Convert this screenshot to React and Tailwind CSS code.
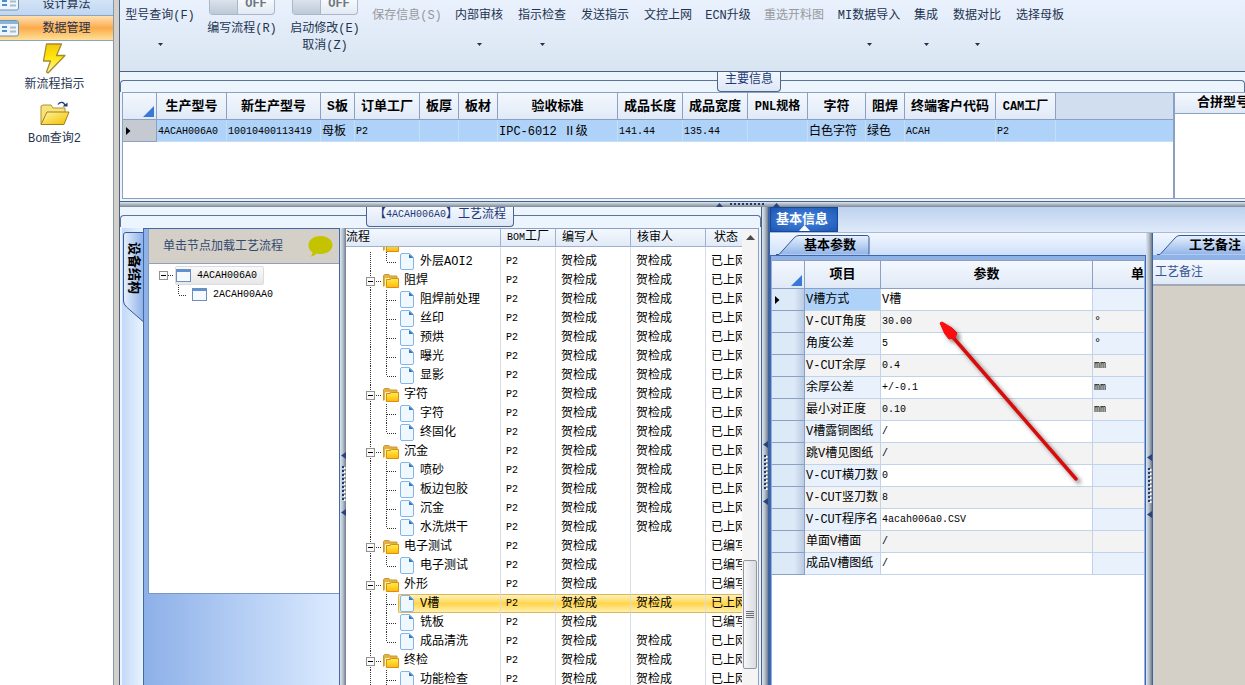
import { useState } from 'react';

const FONT = "font-['Liberation_Mono','Noto_Sans_CJK_SC',monospace]";

const HEADER_BG = 'bg-linear-to-b from-[#f4f8fe] to-[#dfe9f6]';

// ==========================================
// Data
// ==========================================

const actions = [
    { label: '型号查询(F)', width: 'w-[66px]', menu: true },
    { label: '编写流程(R)', width: 'w-[68px]', toggle: true },
    { label: '启动修改(E)', width: 'w-[68px]', toggle: true, second: '取消(Z)' },
    { label: '保存信息(S)', width: 'w-[66px]', disabled: true },
    { label: '内部审核', width: 'w-12', menu: true },
    { label: '指示检查', width: 'w-12', menu: true },
    { label: '发送指示', width: 'w-12' },
    { label: '文控上网', width: 'w-12' },
    { label: 'ECN升级', width: 'w-[42px]' },
    { label: '重选开料图', width: 'w-[60px]', disabled: true },
    { label: 'MI数据导入', width: 'w-[60px]', menu: true },
    { label: '集成', width: 'w-6', menu: true },
    { label: '数据对比', width: 'w-12', menu: true },
    { label: '选择母板', width: 'w-12' },
];

const mainColumns = [
    { title: '生产型号', value: '4ACAH006A0', width: 'w-[70px]' },
    { title: '新生产型号', value: '10010400113419', width: 'w-[94px]' },
    { title: 'S板', value: '母板', width: 'w-[34px]' },
    { title: '订单工厂', value: 'P2', width: 'w-[65px]' },
    { title: '板厚', value: '', width: 'w-[39px]' },
    { title: '板材', value: '', width: 'w-[39px]' },
    { title: '验收标准', value: 'IPC-6012 Ⅱ级', width: 'w-[120px]' },
    { title: '成品长度', value: '141.44', width: 'w-[65px]' },
    { title: '成品宽度', value: '135.44', width: 'w-[65px]' },
    { title: 'PNL规格', value: '', width: 'w-[60px]' },
    { title: '字符', value: '白色字符', width: 'w-[58px]' },
    { title: '阻焊', value: '绿色', width: 'w-[39px]' },
    { title: '终端客户代码', value: 'ACAH', width: 'w-[91px]' },
    { title: 'CAM工厂', value: 'P2', width: 'w-[60px]' },
];

const steps = [
    { name: '外层AOI2', last: true },
    { name: '阻焊', folder: true },
    { name: '阻焊前处理' },
    { name: '丝印' },
    { name: '预烘' },
    { name: '曝光' },
    { name: '显影', last: true },
    { name: '字符', folder: true },
    { name: '字符' },
    { name: '终固化', last: true },
    { name: '沉金', folder: true },
    { name: '喷砂' },
    { name: '板边包胶' },
    { name: '沉金' },
    { name: '水洗烘干', last: true },
    { name: '电子测试', folder: true, pending: true },
    { name: '电子测试', last: true, pending: true },
    { name: '外形', folder: true, pending: true },
    { name: 'V槽' },
    { name: '铣板', pending: true },
    { name: '成品清洗', last: true },
    { name: '终检', folder: true },
    { name: '功能检查' },
];

const params = [
    ['V槽方式', 'V槽', ''],
    ['V-CUT角度', '30.00', '°'],
    ['角度公差', '5', '°'],
    ['V-CUT余厚', '0.4', 'mm'],
    ['余厚公差', '+/-0.1', 'mm'],
    ['最小对正度', '0.10', 'mm'],
    ['V槽露铜图纸', '/', ''],
    ['跳V槽见图纸', '/', ''],
    ['V-CUT横刀数', '0', ''],
    ['V-CUT竖刀数', '8', ''],
    ['V-CUT程序名', '4acah006a0.CSV', ''],
    ['单面V槽面', '/', ''],
    ['成品V槽图纸', '/', ''],
];

// Latin-only values are set smaller so that they take half a CJK cell each
const sizeOf = (text) => (/^[\x20-\x7e]*$/.test(text) ? 'text-[10px]' : 'text-xs');

// ==========================================
// Icons
// ==========================================

function ListIcon() {
    return (
        <svg width="20" height="17" viewBox="0 0 20 17" className="shrink-0">
            <rect x="-3" y="0.5" width="21.5" height="15.5" rx="2" fill="#eef5fc" stroke="#6f93b5" />
            <rect x="-3" y="1" width="21" height="3" fill="#8ab4d8" />
            <path d="M2 6h5v2H2zM2 10h5v2H2z" fill="#4a8fd0" />
            <path d="M10 7.5h6M10 11.5h6" stroke="#a9bccb" strokeWidth="2" />
        </svg>
    );
}

function BoltIcon() {
    return (
        <svg width="24" height="32" viewBox="0 0 24 32">
            <defs>
                <linearGradient id="bolt" x1="0" y1="0" x2="0" y2="1">
                    <stop offset="0" stopColor="#f2c80c" />
                    <stop offset="0.45" stopColor="#ffe60a" />
                    <stop offset="1" stopColor="#fff6b4" />
                </linearGradient>
            </defs>
            <path d="M4.500 1h15l-5 11.500h8.500L6 30l-1.500-1L8.500 18H1.500z" fill="url(#bolt)" stroke="#a88a2c" strokeWidth="1.300" strokeLinejoin="round" />
        </svg>
    );
}

function OpenFolderIcon() {
    return (
        <svg width="30" height="26" viewBox="0 0 30 26">
            <defs>
                <linearGradient id="openFolder" x1="0" y1="0" x2="1" y2="1">
                    <stop offset="0" stopColor="#fff7a0" />
                    <stop offset="1" stopColor="#f2bd00" />
                </linearGradient>
            </defs>
            <path d="M1 23V5l2-1h8l2 3h12v5" fill="#f8e27a" stroke="#b0923a" />
            <path d="M1 23.500L7 11h22l-5 12.500z" fill="url(#openFolder)" stroke="#a37f14" strokeLinejoin="round" />
            <path d="M18 3.500c2-3 6-3 7 1" fill="none" stroke="#263a70" strokeWidth="1.300" />
            <path d="M22.500 5.500h5v-4z" fill="#263a70" />
        </svg>
    );
}

function FolderIcon() {
    return (
        <svg width="16" height="14" viewBox="0 0 16 14" className="shrink-0">
            <defs>
                <linearGradient id="folderFront" x1="0" y1="0" x2="0" y2="1">
                    <stop offset="0" stopColor="#fff04e" />
                    <stop offset="1" stopColor="#ffb60a" />
                </linearGradient>
            </defs>
            <path d="M0.500 12.500V1.500L1.500 0.500h4.500l1 1.500h7v3" fill="#e0b04a" stroke="#cf9a2e" />
            <path d="M3.500 13.500V5.500h4l1-1h7v9z" fill="url(#folderFront)" stroke="#d98f12" />
            <path d="M2.500 13.500V4.500h4" fill="none" stroke="#fff3c0" />
        </svg>
    );
}

function PageIcon() {
    return (
        <svg width="14" height="17" viewBox="0 0 14 17" className="shrink-0">
            <path d="M0.500 2Q0.500 0.500 2 0.500h7.500l4 4V15q0 1.500-1.500 1.500H2Q0.500 16.500 0.500 15z" fill="#eff7ff" stroke="#84b5e8" />
            <path d="M9 1v4h4.500z" fill="#2f78c8" />
        </svg>
    );
}

function WindowIcon() {
    return (
        <svg width="15" height="13" viewBox="0 0 15 13" className="shrink-0">
            <rect x="0.500" y="0.500" width="14" height="12" fill="#f6faff" stroke="#6d8fbd" />
            <rect x="1" y="1" width="13" height="2" fill="#5f92d2" />
        </svg>
    );
}

function DownArrow() {
    return (
        <svg width="5" height="3" viewBox="0 0 5 3">
            <path d="M0 0h5L2.500 3z" fill="#1e3350" />
        </svg>
    );
}

function CornerMark() {
    return (
        <div className="flex h-full items-end justify-end pr-0.5 pb-0.5">
            <svg width="11" height="11" viewBox="0 0 11 11">
                <path d="M11 0v11H0z" fill="#3a78d8" />
            </svg>
        </div>
    );
}

function RowMark() {
    return (
        <svg width="5" height="8" viewBox="0 0 5 8" className="ml-[3px]">
            <path d="M0 0l4.500 4L0 8z" fill="#000" />
        </svg>
    );
}

// Dotted connectors in front of a node of the process tree
function Guides({ folder, last }) {
    return (
        <svg width="52" height="19" viewBox="0 0 52 19" className="shrink-0">
            <g stroke="#333" strokeDasharray="1 1" fill="none">
                <path d="M24.500 0v19" />
                {folder ? (
                    <path d="M28 10.500h7" />
                ) : (
                    <path d={last ? 'M40.500 0v10M41 10.500h9' : 'M40.500 0v19M41 10.500h9'} />
                )}
            </g>
            {folder && (
                <>
                    <rect x="20.500" y="6.500" width="8" height="8" fill="#fafafa" stroke="#919191" />
                    <path d="M22 10.500h5" stroke="#000" />
                </>
            )}
        </svg>
    );
}

// ==========================================
// Shared pieces
// ==========================================

function Splitter() {
    return (
        <div className="flex w-1.5 shrink-0 flex-col items-center justify-center bg-linear-to-r from-[#dbe6f2] via-[#b4bfcc] to-[#717b89] pt-[54px]">
            <svg width="5" height="64" viewBox="0 0 5 64">
                <path d="M5 0v7L0 3.500zM5 57v7L0 60.500z" fill="#2a4378" />
                <path d="M3.500 15v36" stroke="#fff" strokeWidth="2" strokeDasharray="2 2" />
                <path d="M2 14v36" stroke="#24386c" strokeWidth="2" strokeDasharray="2 2" />
            </svg>
        </div>
    );
}

function GroupTitle({ children, className }) {
    return (
        <div className="flex h-5 items-start">
            <div className={`mt-2 h-3 shrink-0 rounded-tl border-t border-l border-[#5b7299] ${className}`} />
            <h2 className="flex h-5 shrink-0 items-center rounded-b-sm border border-t-0 border-[#4f658c] bg-linear-to-b from-[#f4f8fe] to-[#dce7f6] px-[7px] pb-[3px] text-xs whitespace-nowrap text-[#1e3878]">
                {children}
            </h2>
            <div className="mt-2 h-3 flex-1 rounded-tr border-t border-r border-[#5b7299]" />
        </div>
    );
}

function SlantTab({ children, id }) {
    return (
        <button className="relative h-5 w-[94px] shrink-0 text-[13px] font-bold text-black">
            <svg className="absolute inset-0" width="94" height="20" viewBox="0 0 94 20">
                <defs>
                    <linearGradient id={id} x1="0" y1="0" x2="0" y2="1">
                        <stop offset="0" stopColor="#e8f1fd" />
                        <stop offset="1" stopColor="#91b4e8" />
                    </linearGradient>
                </defs>
                <path d="M0 19.500h3L18 3q2-2.500 5-2.500h68q2 0 2 2v17" fill={`url(#${id})`} stroke="#355a94" />
            </svg>
            <span className="relative block pt-px pl-3.5">{children}</span>
        </button>
    );
}

function ActionButton({ item }) {
    const [on, setOn] = useState(false);

    if (item.toggle) {
        return (
            <div className={`flex flex-col items-center ${item.width}`}>
                <button
                    role="switch"
                    aria-checked={on}
                    aria-label={item.label}
                    onClick={() => setOn(!on)}
                    className="flex h-[15px] w-[66px] rounded-b-sm border border-t-0 border-[#a9b8c9] bg-linear-to-b from-[#f6f9fd] to-[#e3eaf3]"
                >
                    <span className="h-full w-7 border-r border-[#a9b8c9] bg-linear-to-b from-[#dbe3ec] to-[#bcc9d7]" />
                    <span className="flex-1 text-xs leading-[9px] font-bold text-[#6f7780]">OFF</span>
                </button>
                <span className="mt-1.5 leading-[17px] whitespace-nowrap">{item.label}</span>
                {item.second && <span className="leading-[17px]">{item.second}</span>}
            </div>
        );
    }

    return (
        <button
            disabled={item.disabled}
            className={`flex h-12 flex-col items-center pt-2 disabled:text-[#97999c] ${item.width}`}
        >
            <span className="mb-[19px] leading-4 whitespace-nowrap">{item.label}</span>
            {item.menu && <DownArrow />}
        </button>
    );
}

// ==========================================
// Sidebar
// ==========================================

function Sidebar() {
    return (
        <nav className="flex w-[114px] shrink-0 flex-col border-r border-[#8497b2] bg-white text-xs text-[#1e3350]">
            <button className="flex h-4 items-end overflow-hidden border-b border-[#8ba4c4] bg-linear-to-b from-[#d4e4f7] to-[#c0d6f0]">
                <span className="pb-1">
                    <ListIcon />
                </span>
                <span className="flex-1 text-center leading-5">设计算法</span>
            </button>
            <button className="flex h-[25px] items-center border-b border-[#8ba4c4] bg-linear-to-b from-[#fde0b0] via-[#fbab48] to-[#ffe197]">
                <ListIcon />
                <span className="flex-1 pt-0.5 text-center">数据管理</span>
            </button>
            <div className="flex flex-col items-center pr-1">
                <button className="flex flex-col items-center pt-0.5">
                    <BoltIcon />
                    <span className="pt-0.5 leading-4">新流程指示</span>
                </button>
                <button className="flex flex-col items-center pt-2">
                    <OpenFolderIcon />
                    <span className="pt-1 leading-4">Bom查询2</span>
                </button>
            </div>
        </nav>
    );
}

// ==========================================
// Main information
// ==========================================

function MainTable() {
    return (
        <div className="flex min-w-0 flex-1 overflow-hidden border border-[#8ba0c2] bg-white">
            <table className="w-full table-fixed border-separate border-spacing-0 self-start">
                <thead>
                    <tr className={`h-[27px] text-[13px] ${HEADER_BG}`}>
                        <th className="h-[27px] w-[34px] border-r border-b border-[#8ba0c2] p-0">
                            <CornerMark />
                        </th>
                        {mainColumns.map((col) => (
                            <th
                                key={col.title}
                                className={`border-r border-b border-[#8ba0c2] p-0 pt-0.5 whitespace-nowrap ${/[A-Z]{3}/.test(col.title) ? 'text-xs' : ''} ${col.width}`}
                            >
                                {col.title}
                            </th>
                        ))}
                        <th className="border-b border-[#8ba0c2] bg-[#d1deef]" />
                    </tr>
                </thead>
                <tbody>
                    <tr className="bg-[#aed2f8]">
                        <td className="h-[22px] border-r border-b border-[#8ba0c2] bg-[#c5cad2] p-0">
                            <RowMark />
                        </td>
                        {mainColumns.map((col) => (
                            <td
                                key={col.title}
                                className={`border-r border-b border-[#c4def8] p-0 pt-0.5 pl-px leading-4 whitespace-nowrap ${sizeOf(col.value)}`}
                            >
                                {col.value}
                            </td>
                        ))}
                        <td className="border-b border-[#c4def8]" />
                    </tr>
                </tbody>
            </table>
        </div>
    );
}

// ==========================================
// Structure panel
// ==========================================

function StructurePanel() {
    return (
        <div className="flex w-[218px] shrink-0">
            <div className="w-[21px] shrink-0 bg-linear-to-r from-[#c3d9f8] to-[#eaf3ff]">
                <button className="relative mt-1 ml-px h-[90px] w-5 text-[13px] font-bold">
                    <svg className="absolute inset-0" width="20" height="90" viewBox="0 0 20 90">
                        <defs>
                            <linearGradient id="sideTab">
                                <stop offset="0" stopColor="#e6f0fd" />
                                <stop offset="1" stopColor="#8fb2e8" />
                            </linearGradient>
                        </defs>
                        <path d="M20 0.500H3Q0.500 0.500 0.500 3v66q0 3 3 6L20 89.500" fill="url(#sideTab)" stroke="#355a94" />
                    </svg>
                    <span className="absolute top-2.5 left-0.5 leading-4 [text-orientation:sideways] [writing-mode:vertical-rl]">
                        设备结构
                    </span>
                </button>
            </div>
            <div className="flex min-w-0 flex-1 flex-col border-x border-t border-[#4368a8] bg-linear-to-r from-[#8db0e8] to-[#dcebff] pl-1">
                <div className="flex h-[35px] items-center justify-between border-b border-l border-[#8ba0c2] bg-[#d4d0c8] pr-1.5 pl-3.5">
                    <span className="pt-0.5 text-xs whitespace-nowrap text-[#324a70]">单击节点加载工艺流程</span>
                    <svg width="25" height="21" viewBox="0 0 24 21">
                        <path d="M12 0c7 0 12 4 12 9s-5 9-12 9q-2 0-4-0.500Q6 20 2 20.500q2-2 2-4Q0 14 0 9C0 4 5 0 12 0z" fill="#c3c300" />
                    </svg>
                </div>
                <ul className="h-[330px] border-b border-l border-[#7897c4] bg-white pt-0.5 text-[10px]">
                    <li className="flex h-[19px] items-center pl-[9px]">
                        <svg width="17" height="19" viewBox="0 0 17 19">
                            <rect x="1.500" y="5.500" width="8" height="8" fill="#fafafa" stroke="#919191" />
                            <path d="M3 9.500h5" stroke="#000" />
                            <path d="M10 9.500h6" stroke="#333" strokeDasharray="1 1" />
                        </svg>
                        <span className="flex h-[19px] items-center gap-1.5 rounded-xs border border-[#dcdcdc] bg-linear-to-b from-[#fafafa] to-[#e7e7e7] pr-1.5">
                            <WindowIcon />
                            4ACAH006A0
                        </span>
                    </li>
                    <li className="flex h-[19px] items-center gap-1.5 pl-7">
                        <svg width="9" height="19" viewBox="0 0 9 19">
                            <path d="M1.500 0v10M2 10.500h7" stroke="#333" strokeDasharray="1 1" />
                        </svg>
                        <WindowIcon />
                        2ACAH00AA0
                    </li>
                </ul>
            </div>
        </div>
    );
}

// ==========================================
// Process tree
// ==========================================

function ProcessTree() {
    const [selected, setSelected] = useState(18);

    const highlight = 'border-y border-y-[#dcb65a] bg-linear-to-b from-[#fff1b5] via-[#ffd548] to-[#fff0a8]';
    const head = 'border-r border-b border-[#9fb1cd] p-0 pl-1.5 text-left font-normal';
    const cell = 'overflow-hidden border-[#d9dde3] p-0 pl-[5px] leading-4 whitespace-nowrap';

    return (
        <div className="flex min-w-0 flex-1 overflow-hidden border-t border-r border-[#8ba0c2] bg-white">
            <div className="min-w-0 flex-1">
                <table className="w-full table-fixed border-separate border-spacing-0 text-xs">
                    <thead>
                        <tr className={`h-[18px] leading-4 ${HEADER_BG}`}>
                            <th className="w-[155px] border-r border-b border-[#9fb1cd] p-0 text-left font-normal">流程</th>
                            <th className={`w-[55px] whitespace-nowrap ${head}`}>
                                <span className="text-[10px]">BOM</span>工厂
                            </th>
                            <th className={`w-[75px] ${head}`}>编写人</th>
                            <th className={`w-[75px] ${head}`}>核审人</th>
                            <th className="border-b border-[#9fb1cd] p-0 pl-2 text-left font-normal">状态</th>
                        </tr>
                    </thead>
                    <tbody>
                        {/* Sliver of the row scrolled under the header */}
                        <tr>
                            <td className="border-r border-[#d9dde3] p-0">
                                <div className="flex h-[5px] items-end overflow-hidden pl-[37px]">
                                    <FolderIcon />
                                </div>
                            </td>
                            <td className="border-r border-[#d9dde3] p-0" />
                            <td className="border-r border-[#d9dde3] p-0" />
                            <td className="border-r border-[#d9dde3] p-0" />
                            <td className="p-0" />
                        </tr>
                        {steps.map((step, index) => {
                            const active = index === selected;
                            const audited = !step.pending;

                            return (
                                <tr key={index} onClick={() => setSelected(index)}>
                                    <td className="border-r border-[#d9dde3] p-0">
                                        <div className="flex h-[19px] items-center overflow-hidden">
                                            {step.folder ? (
                                                <div className="w-[37px] shrink-0 overflow-hidden">
                                                    <Guides folder />
                                                </div>
                                            ) : (
                                                <Guides last={step.last} />
                                            )}
                                            <div
                                                className={`flex h-full flex-1 items-center whitespace-nowrap ${step.folder ? 'gap-[5px]' : 'gap-1.5'} ${active ? `rounded-l-xs border-l border-l-[#dcb65a] pl-px ${highlight}` : step.folder ? '' : 'pl-0.5'}`}
                                            >
                                                {step.folder ? <FolderIcon /> : <PageIcon />}
                                                {step.name}
                                            </div>
                                        </div>
                                    </td>
                                    <td className={`border-r text-[10px] ${cell} ${active ? highlight : ''}`}>P2</td>
                                    <td className={`border-r ${cell} ${active ? highlight : ''}`}>贺检成</td>
                                    <td className={`border-r ${cell} ${active ? highlight : ''}`}>{audited ? '贺检成' : ''}</td>
                                    <td className={`${cell} ${active ? highlight : ''}`}>{audited ? '已上网' : '已编写'}</td>
                                </tr>
                            );
                        })}
                    </tbody>
                </table>
            </div>
            <div className="flex w-4 shrink-0 flex-col items-center bg-[#f4f4f5] pb-4">
                <svg width="9" height="5" viewBox="0 0 9 5" className="mt-1.5">
                    <path d="M4.500 0L9 5H0z" fill="#4b4b4f" />
                </svg>
                <div className="flex-1" />
                <div className="flex h-[109px] w-3.5 flex-col items-center justify-center gap-px rounded-xs border border-[#94989e] bg-linear-to-r from-[#f6f7f9] to-[#d8dbe0]">
                    <span className="h-px w-2 bg-[#6c7076]" />
                    <span className="h-px w-2 bg-[#6c7076]" />
                    <span className="h-px w-2 bg-[#6c7076]" />
                    <span className="h-px w-2 bg-[#6c7076]" />
                </div>
            </div>
        </div>
    );
}

// ==========================================
// Parameters
// ==========================================

function ParamTable() {
    const head = 'h-7 border-r border-b border-[#8ba0c2] p-0';

    return (
        <div className="min-h-0 flex-1 border-x border-t border-[#4368a8] bg-[#8fb2e6] px-px pt-1">
            <div className="h-full border-t border-[#8ba0c2] bg-white">
                <table className="w-full table-fixed border-separate border-spacing-0 text-xs">
                    <thead>
                        <tr className={`text-[13px] ${HEADER_BG}`}>
                            <th className={`w-[33px] ${head}`}>
                                <CornerMark />
                            </th>
                            <th className={`w-[76px] ${head}`}>项目</th>
                            <th className={head}>参数</th>
                            <th className="w-[51px] border-b border-[#8ba0c2] p-0 text-right">单</th>
                        </tr>
                    </thead>
                    <tbody>
                        {params.map(([name, value, unit], index) => {
                            const tint = index % 2 ? 'bg-[#f3f3f3]' : 'bg-[#e9f2fc]';

                            return (
                                <tr key={name} className="leading-4">
                                    <td className="h-[22px] border-r border-b border-[#8ba0c2] bg-linear-to-r from-[#dce9f7] from-70% to-[#b9cbe3] p-0">
                                        {index === 0 && <RowMark />}
                                    </td>
                                    <td
                                        className={`border-r border-b border-[#c1d3eb] p-0 pl-px whitespace-nowrap ${index === 0 ? 'bg-[#aed2f8]' : tint}`}
                                    >
                                        {name}
                                    </td>
                                    <td
                                        className={`border-r border-b border-[#c1d3eb] p-0 pl-px ${sizeOf(value)} ${index % 2 ? 'bg-[#f3f3f3]' : 'bg-white'}`}
                                    >
                                        {value}
                                    </td>
                                    <td className={`border-b border-[#c1d3eb] p-0 pl-px ${sizeOf(unit)} ${tint}`}>{unit}</td>
                                </tr>
                            );
                        })}
                    </tbody>
                </table>
            </div>
        </div>
    );
}

function DetailPanel() {
    return (
        <div className="relative flex min-w-0 flex-1 flex-col border-l-2 border-[#3f62a0] bg-[#e4eefb]">
            <div className="flex h-[26px] shrink-0 border-b border-[#a9bad2] bg-linear-to-b from-[#bdd2ee] to-[#dfeafa]">
                <button className="relative w-[68px] border border-[#15479a] bg-radial from-[#4a8ae2] to-[#1c56b4] pr-1 text-[13px] font-bold whitespace-nowrap text-white">
                    基本信息
                    <svg className="absolute bottom-0 left-7" width="11" height="6" viewBox="0 0 11 6">
                        <path d="M5.500 0L11 6H0z" fill="#fff" />
                    </svg>
                </button>
            </div>
            <div className="flex min-h-0 flex-1">
                <section className="flex min-w-0 flex-1 flex-col">
                    <div className="flex h-[22px] items-end bg-linear-to-b from-[#f2f7ff] to-[#cfe0fa] pl-1.5">
                        <SlantTab id="paramTab">基本参数</SlantTab>
                    </div>
                    <ParamTable />
                </section>
                <Splitter />
                <section className="flex w-[93px] shrink-0 flex-col overflow-hidden border-l border-[#3f62a0] bg-[#d4d0c8]">
                    <div className="flex h-[22px] shrink-0 items-end bg-linear-to-b from-[#f2f7ff] to-[#cfe0fa] pl-1">
                        <SlantTab id="noteTab">
                            <span className="pl-2">工艺备注</span>
                        </SlantTab>
                    </div>
                    <div className="h-[5px] shrink-0 bg-[#8fb2e6]" />
                    <div className={`h-[26px] shrink-0 border-b-2 border-[#a1a9b4] pt-px pl-0.5 text-xs leading-6 text-[#35578f] ${HEADER_BG}`}>
                        工艺备注
                    </div>
                </section>
            </div>

            {/* Pointer to the V-CUT angle */}
            <svg className="pointer-events-none absolute top-[110px] left-[165px]" width="150" height="175" viewBox="0 0 150 175">
                <defs>
                    <filter id="pointerShadow" x="-10%" y="-10%" width="130%" height="130%">
                        <feDropShadow dx="3" dy="3" stdDeviation="2" floodColor="#000" floodOpacity="0.5" />
                    </filter>
                </defs>
                <g filter="url(#pointerShadow)">
                    <path d="M16 18L141 162" stroke="#d60c0c" strokeWidth="3.500" strokeLinecap="round" />
                    <path d="M5 6L7 5L17 11L22 16L20 21L14 22L10 17z" fill="#fb0a0a" stroke="#ee0808" strokeLinejoin="round" />
                </g>
            </svg>
        </div>
    );
}

export default function App() {
    return (
        <div className={`flex h-screen overflow-hidden bg-[#d4d0c8] text-xs text-black ${FONT}`}>
            <Sidebar />

            <main className="ml-[5px] flex min-w-0 flex-1 flex-col border-l border-[#4a6285] bg-[#ecf4fd]">

                {/* Ribbon */}
                <header className="flex h-[72px] shrink-0 gap-[15px] border-b border-[#4a6285] bg-linear-to-b from-[#e9f1fd] to-[#d8e5f1] pl-[7px] text-[#1e3350]">
                    {actions.map((item) => (
                        <ActionButton key={item.label} item={item} />
                    ))}
                </header>

                {/* Main information */}
                <section className="flex h-[130px] shrink-0 flex-col border-b border-[#4a6285]">
                    <GroupTitle className="w-[597px]">主要信息</GroupTitle>
                    <div className="flex min-h-0 flex-1 pb-0.5 pl-0.5">
                        <MainTable />
                        <div className="w-[71px] shrink-0 overflow-hidden border-y border-l border-[#8ba0c2] bg-white">
                            <div className={`h-[21px] border-b border-[#8ba0c2] pl-[22px] text-[13px] leading-5 font-bold whitespace-nowrap ${HEADER_BG}`}>
                                合拼型号
                            </div>
                        </div>
                    </div>
                </section>

                <div className="flex h-[5px] shrink-0 justify-center bg-linear-to-b from-[#dce6f1] to-[#7d8896] pl-[130px]">
                    <svg width="64" height="5" viewBox="0 0 64 5">
                        <path d="M0 5h7L3.500 1zM57 5h7L60.500 1z" fill="#2a4378" />
                        <path d="M14 2h36" stroke="#24386c" strokeWidth="2" strokeDasharray="2 2" />
                    </svg>
                </div>

                <div className="flex min-h-0 flex-1">
                    <section className="flex w-[642px] shrink-0 flex-col border-r border-[#4a6285]">
                        <GroupTitle className="w-[246px]">
                            【<span className="text-[10px]">4ACAH006A0</span>】工艺流程
                        </GroupTitle>
                        <div className="flex min-h-0 flex-1 pt-px pr-0.5 pl-0.5">
                            <StructurePanel />
                            <Splitter />
                            <ProcessTree />
                        </div>
                    </section>
                    <Splitter />
                    <DetailPanel />
                </div>
            </main>
        </div>
    );
}
